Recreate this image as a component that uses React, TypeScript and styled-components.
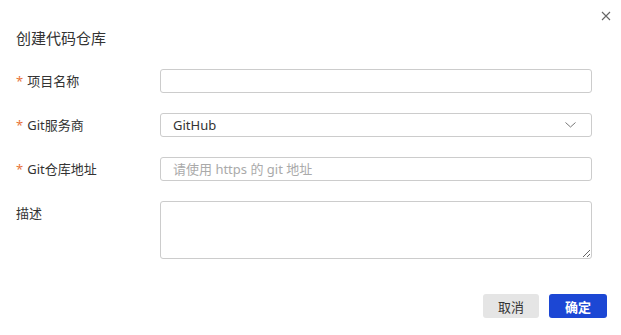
import * as React from 'react';
import styled, { createGlobalStyle } from 'styled-components';

const GlobalStyle = createGlobalStyle`
    html, body {
        margin: 0;
        padding: 0;
        background: #ffffff;
    }
    body {
        font-family: "Noto Sans", "Noto Sans CJK SC", sans-serif;
        color: #333333;
    }
`;

const fields = [
    { label: '项目名称', required: true, kind: 'input', placeholder: '' },
    { label: 'Git服务商', required: true, kind: 'select', value: 'GitHub' },
    { label: 'Git仓库地址', required: true, kind: 'input', placeholder: '请使用 https 的 git 地址' },
    { label: '描述', required: false, kind: 'textarea' }
];

const App = (): JSX.Element => <Dialog>
    <GlobalStyle />
    <Header>
        <Title>创建代码仓库</Title>
        <Close aria-label="close">
            <svg width="10" height="10" viewBox="0 0 10 10">
                <path d="M1 1 L9 9 M9 1 L1 9" stroke="#666" strokeWidth="1.1" fill="none" />
            </svg>
        </Close>
    </Header>
    <Form>
        {fields.map((field, index) => <Row key={index} tall={field.kind === 'textarea'}>
            <Label>
                {field.required && <Star>*</Star>}
                {field.label}
            </Label>
            {field.kind === 'input' && <Input placeholder={field.placeholder} />}
            {field.kind === 'select' && <Select>
                <span>{field.value}</span>
                <svg width="11" height="6" viewBox="0 0 11 6">
                    <path d="M0.5 0.5 L5.5 5 L10.5 0.5" stroke="#777" strokeWidth="1" fill="none" />
                </svg>
            </Select>}
            {field.kind === 'textarea' && <TextArea />}
        </Row>)}
    </Form>
    <Footer>
        <Button>取消</Button>
        <Button primary>确定</Button>
    </Footer>
</Dialog>;

export default App;

const Dialog = styled.div`
    width: 621px;
    height: 335px;
    box-sizing: border-box;
    background: #ffffff;
    display: flex;
    flex-direction: column;
`;

const Header = styled.div`
    display: flex;
    justify-content: space-between;
    align-items: flex-start;
    padding: 11px 10px 0 16px;
    height: 57px;
    box-sizing: border-box;
`;

const Title = styled.h2`
    margin: 17px 0 0;
    font-size: 15px;
    font-weight: 400;
    line-height: 20px;
    color: #333333;
`;

const Close = styled.button`
    border: 0;
    background: none;
    padding: 0;
    width: 10px;
    height: 10px;
    cursor: pointer;
    display: flex;
`;

const Form = styled.div`
    display: flex;
    flex-direction: column;
    gap: 20px;
    padding: 12px 29px 0 16px;
`;

const Row = styled.div<{ tall?: boolean }>`
    display: grid;
    grid-template-columns: 144px 432px;
    align-items: ${props => props.tall ? 'start' : 'center'};
    height: ${props => props.tall ? '58px' : '24px'};
`;

const Label = styled.label`
    font-size: 13px;
    line-height: 24px;
    color: #333333;
`;

const Star = styled.span`
    color: #e8743b;
    margin-right: 4px;
`;

const fieldBox = `
    box-sizing: border-box;
    width: 432px;
    border: 1px solid #cccccc;
    border-radius: 3px;
    background: #ffffff;
    font-family: "Noto Sans", "Noto Sans CJK SC", sans-serif;
    font-size: 13px;
    color: #333333;
    outline: none;
`;

const Input = styled.input`
    ${fieldBox}
    height: 24px;
    padding: 0 12px;

    &::placeholder {
        color: #aaaaaa;
    }
`;

const Select = styled.div`
    ${fieldBox}
    height: 24px;
    padding: 0 15px 0 12px;
    display: flex;
    align-items: center;
    justify-content: space-between;
`;

const TextArea = styled.textarea`
    ${fieldBox}
    height: 58px;
    resize: vertical;
    padding: 4px 12px;
`;

const Footer = styled.div`
    margin-top: auto;
    display: flex;
    justify-content: flex-end;
    gap: 10px;
    padding: 0 14px 17px 0;
`;

const Button = styled.button<{ primary?: boolean }>`
    height: 24px;
    padding: 0 ${props => props.primary ? 16 : 15}px;
    border: 0;
    border-radius: 3px;
    font-family: "Noto Sans", "Noto Sans CJK SC", sans-serif;
    font-size: 13px;
    font-weight: ${props => props.primary ? 700 : 400};
    background: ${props => props.primary ? '#1c47d4' : '#e5e5e5'};
    color: ${props => props.primary ? '#ffffff' : '#333333'};
    cursor: pointer;
`;
